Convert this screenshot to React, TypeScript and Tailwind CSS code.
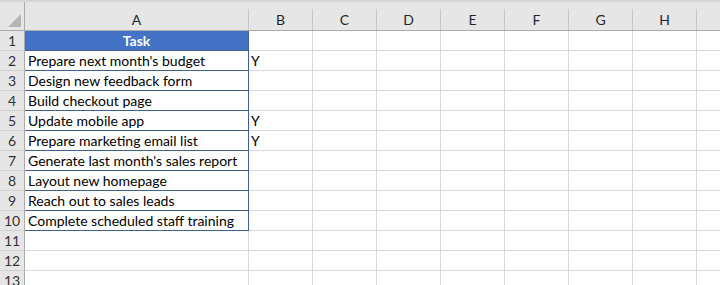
import React from "react";

const tasks = [
  "Prepare next month's budget",
  "Design new feedback form",
  "Build checkout page",
  "Update mobile app",
  "Prepare marketing email list",
  "Generate last month's sales report",
  "Layout new homepage",
  "Reach out to sales leads",
  "Complete scheduled staff training",
];

const flags: Record<number, string> = { 2: "Y", 5: "Y", 6: "Y" };
const cols = ["B", "C", "D", "E", "F", "G", "H"];

const App: React.FC = () => {
  const rows = Array.from({ length: 13 }, (_, i) => i + 1);

  return (
    <div className="w-[720px] h-[285px] overflow-hidden bg-white font-['Lato','Open_Sans',sans-serif] text-[14px] text-black">
      {/* Column headers */}
      <div className="flex h-[31px] bg-[#e6e6e6] border-t-2 border-t-[#d6d6d6] border-b border-b-[#ababab]">
        <div className="relative w-[25px] shrink-0 border-r border-r-[#ababab]">
          <div className="absolute right-[3px] bottom-[3px] w-0 h-0 border-l-[13px] border-l-transparent border-b-[13px] border-b-[#b5b5b5]" />
        </div>
        <div className="w-[224px] shrink-0 flex items-end">
          <div className="w-full h-[21px] flex items-center justify-center border-r border-r-[#c6c6c6] text-[#262626]">A</div>
        </div>
        {cols.map((c) => (
          <div key={c} className="w-[64px] shrink-0 flex items-end">
            <div className="w-full h-[21px] flex items-center justify-center border-r border-r-[#c6c6c6] text-[#262626]">{c}</div>
          </div>
        ))}
        <div className="flex-1" />
      </div>

      {/* Rows */}
      {rows.map((r) => {
        const inTable = r <= 10;
        const isHead = r === 1;
        return (
          <div key={r} className="flex h-[20px]">
            <div className="w-[25px] shrink-0 bg-[#e6e6e6] border-r border-r-[#ababab] border-b border-b-[#d0d0d0] flex items-center justify-center text-[#333]">
              {r}
            </div>
            <div
              className={
                inTable
                  ? isHead
                    ? "w-[224px] shrink-0 bg-[#4472c4] border-r border-b border-[#41608d] flex items-center justify-center font-bold text-white"
                    : "w-[224px] shrink-0 border-r border-b border-[#41608d] flex items-center pl-[3px] whitespace-nowrap"
                  : "w-[224px] shrink-0 border-r border-b border-[#d9d9d9]"
              }
            >
              {isHead ? "Task" : inTable ? tasks[r - 2] : null}
            </div>
            {cols.map((c) => (
              <div key={c} className="w-[64px] shrink-0 border-r border-b border-[#d9d9d9] flex items-center pl-[2px]">
                {c === "B" ? flags[r] : null}
              </div>
            ))}
            <div className="flex-1 border-b border-[#d9d9d9]" />
          </div>
        );
      })}
    </div>
  );
};

export default App;
